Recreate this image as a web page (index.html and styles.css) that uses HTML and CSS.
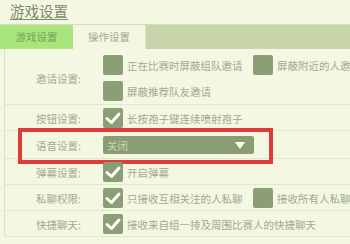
FILE: index.html
```html
<!DOCTYPE html>
<html lang="zh">
<head>
  <meta charset="UTF-8" />
  <title>游戏设置</title>
  <link rel="stylesheet" href="styles.css">
</head>
<body>
  <header class="title"><span>游戏设置</span></header>

  <nav class="tabs">
    <div class="tab active">游戏设置</div>
    <div class="tab">操作设置</div>
  </nav>

  <main class="panel">
    <div class="row tall">
      <div class="label">邀请设置:</div>
      <div class="opts">
        <div class="line">
          <div class="opt wide"><span class="box"></span>正在比赛时屏蔽组队邀请</div>
          <div class="opt"><span class="box"></span>屏蔽附近的人邀请</div>
        </div>
        <div class="line">
          <div class="opt"><span class="box"></span>屏蔽推荐队友邀请</div>
        </div>
      </div>
    </div>

    <div class="row">
      <div class="label">按钮设置:</div>
      <div class="opts">
        <div class="opt"><span class="box on"><svg viewBox="0 0 20 20"><path d="M4 10.5 L8.5 14.5 L16 6" /></svg></span>长按孢子键连续喷射孢子</div>
      </div>
    </div>

    <div class="row voice">
      <div class="label">语音设置:</div>
      <div class="opts">
        <div class="select">
          <span>关闭</span>
          <svg class="arrow" viewBox="0 0 12 8"><polygon points="0,0 12,0 6,8" /></svg>
        </div>
      </div>
      <div class="highlight"></div>
    </div>

    <div class="row">
      <div class="label">弹幕设置:</div>
      <div class="opts">
        <div class="opt"><span class="box on"><svg viewBox="0 0 20 20"><path d="M4 10.5 L8.5 14.5 L16 6" /></svg></span>开启弹幕</div>
      </div>
    </div>

    <div class="row">
      <div class="label">私聊权限:</div>
      <div class="opts">
        <div class="line">
          <div class="opt wide"><span class="box on"><svg viewBox="0 0 20 20"><path d="M4 10.5 L8.5 14.5 L16 6" /></svg></span>只接收互相关注的人私聊</div>
          <div class="opt"><span class="box"></span>接收所有人私聊</div>
        </div>
      </div>
    </div>

    <div class="row">
      <div class="label">快捷聊天:</div>
      <div class="opts">
        <div class="opt"><span class="box on"><svg viewBox="0 0 20 20"><path d="M4 10.5 L8.5 14.5 L16 6" /></svg></span>接收来自组一排及周围比赛人的快捷聊天</div>
      </div>
    </div>
  </main>
</body>
</html>
```

FILE: styles.css
```css
:root {
  --bg: #f4f8e2;
  --line: #e1e8cb;
  --box: #8c9e76;
  --text: #a0ab90;
  --red: #e03a3a;
}

html, body {
  margin: 0;
  padding: 0;
  background: var(--bg);
  color: var(--text);
  font-family: "Noto Sans CJK SC", sans-serif;
  font-size: 10.5px;
  overflow: hidden;
  white-space: nowrap;
}

.title {
  height: 24px;
  padding-left: 10px;
  font-size: 14.5px;
  line-height: 22px;
  color: #7d8a6e;
}

.title span {
  display: inline-block;
  line-height: 17px;
  border-bottom: 1px solid #7d8a6e;
}

.tabs {
  display: flex;
  height: 24px;
  background: #c8d4aa;
  border-top: 1px solid #d6dfbd;
}

.tab {
  width: 73px;
  line-height: 24px;
  text-align: center;
  background: #f3f6e1;
  color: #a1a992;
  border-right: 1px solid #dde3c7;
  box-sizing: border-box;
}

.tab.active {
  background: #a8e57d;
  color: #76a155;
  border-right: none;
}

.panel {
  margin-left: 4px;
  border-left: 1px solid #dbe2c4;
}

.row {
  position: relative;
  display: flex;
  align-items: center;
  padding: 3px 0 2px;
  border-bottom: 1px solid var(--line);
}

.row.tall {
  padding: 6px 0 3px;
}

.row.voice {
  padding: 5px 0 4px;
}

.label {
  width: 76px;
  padding-right: 22px;
  text-align: right;
  flex-shrink: 0;
}

.opts {
  display: flex;
  flex-direction: column;
  gap: 6px;
}

.line {
  display: flex;
}

.opt {
  display: flex;
  align-items: center;
  height: 20px;
}

.opt.wide {
  width: 150px;
}

.box {
  width: 20px;
  height: 20px;
  margin-right: 4px;
  border-radius: 2px;
  background: var(--box);
  flex-shrink: 0;
}

.box svg {
  width: 20px;
  height: 20px;
  display: block;
}

.box svg path {
  fill: none;
  stroke: #fff;
  stroke-width: 3;
  stroke-linecap: round;
  stroke-linejoin: round;
}

.select {
  display: flex;
  align-items: center;
  justify-content: space-between;
  width: 151px;
  height: 18px;
  padding: 0 8px 0 4px;
  box-sizing: border-box;
  background: #8a9d72;
  border-radius: 2px;
  color: #c9d5b4;
}

.arrow {
  width: 12px;
  height: 7px;
  fill: #fff;
}

.highlight {
  position: absolute;
  left: 13px;
  top: -3px;
  width: 247px;
  height: 28px;
  border: 4px solid var(--red);
}
```
